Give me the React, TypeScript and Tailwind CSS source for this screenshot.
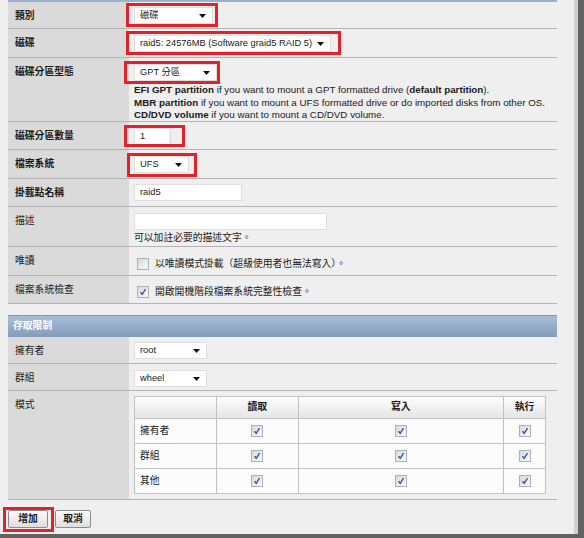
import React from "react";

function Arrow() {
  return (
    <svg width="7" height="4" viewBox="0 0 7 4" className="shrink-0">
      <polygon points="0,0 7,0 3.5,4" fill="#111" />
    </svg>
  );
}

function Select({ text, className }: { text: string; className: string }) {
  return (
    <div
      className={`flex h-[17px] items-center justify-between border border-[#dedede] bg-white pl-[5px] pr-[6px] text-[9.3px] ${className}`}
    >
      <span className="whitespace-nowrap">{text}</span>
      <Arrow />
    </div>
  );
}

function Input({ text, className }: { text?: string; className: string }) {
  return (
    <div className={`flex h-[17px] items-center border border-[#dedede] bg-white pl-[5px] text-[9.3px] ${className}`}>
      {text}
    </div>
  );
}

function Red({ className }: { className: string }) {
  return <span className={`pointer-events-none absolute border-[3px] border-[#e1222a] ${className}`} />;
}

function Check({ on }: { on?: boolean }) {
  return (
    <span className="inline-flex h-[12px] w-[12px] shrink-0 items-center justify-center border border-[#a9b1bb] bg-gradient-to-br from-[#d8d8d8] to-[#fbfbfb]">
      {on && (
        <svg width="8" height="8" viewBox="0 0 8 8">
          <path d="M1.5 4.2 L3.2 6.3 L6.5 1.2" fill="none" stroke="#3653b0" strokeWidth="1.4" />
        </svg>
      )}
    </span>
  );
}

function Row({
  label,
  bold,
  h,
  children,
}: {
  label: string;
  bold?: boolean;
  h: string;
  children?: React.ReactNode;
}) {
  return (
    <div className={`flex border-b border-[#b4b4b4] ${h}`}>
      <div className={`w-[121px] shrink-0 bg-[#dadada] pl-[7px] pt-[8px] leading-[12px] ${bold ? "font-bold" : ""}`}>
        {label}
      </div>
      <div className="flex-1 pl-[5px]">{children}</div>
    </div>
  );
}

export default function App() {
  return (
    <div className="h-[538px] w-[584px] overflow-hidden bg-[#626262] font-['Liberation_Sans','Noto_Sans_CJK_TC',sans-serif] text-[9.8px] text-[#1a1a1a]">
      <div className="h-[534px] w-[578px] border-r-[4px] border-[#cfcfcf] bg-[#efefef]">
        <div className="ml-[8px] w-[549px]">
          <div className="h-[2px] bg-[#9cb1cc]" />

          <Row label="類別" bold h="h-[27px]">
            <div className="relative mt-[5px] w-[79px]">
              <Select text="磁碟" className="w-[79px]" />
              <Red className="-top-[4px] -bottom-[3px] -left-[8px] -right-[5px]" />
            </div>
          </Row>

          <Row label="磁碟" bold h="h-[29px]">
            <div className="relative mt-[6px] w-[197px]">
              <Select text="raid5: 24576MB (Software graid5 RAID 5)" className="w-[197px]" />
              <Red className="-top-[4px] -bottom-[3px] -left-[8px] -right-[10px]" />
            </div>
          </Row>

          <Row label="磁碟分區型態" bold h="h-[64px]">
            <div className="relative mt-[6px] w-[83px]">
              <Select text="GPT 分區" className="w-[83px] h-[16px]" />
              <Red className="-top-[3px] -bottom-[3px] -left-[10px] -right-[3px]" />
            </div>
            <div className="mt-[3px] leading-[12.5px]">
              <div>
                <b>EFI GPT partition</b> if you want to mount a GPT formatted drive (<b>default partition</b>).
              </div>
              <div>
                <b>MBR partition</b> if you want to mount a UFS formatted drive or do imported disks from other OS.
              </div>
              <div>
                <b>CD/DVD volume</b> if you want to mount a CD/DVD volume.
              </div>
            </div>
          </Row>

          <Row label="磁碟分區數量" bold h="h-[28px]">
            <div className="relative mt-[6px] w-[38px]">
              <Input text="1" className="w-[38px] border-r-[3px] border-r-[#e6e6e6]" />
              <Red className="-top-[3px] -bottom-[2px] -left-[10px] -right-[13px]" />
            </div>
          </Row>

          <Row label="檔案系統" bold h="h-[29px]">
            <div className="relative mt-[6px] w-[55px]">
              <Select text="UFS" className="w-[55px]" />
              <Red className="-top-[3px] -bottom-[4px] -left-[7px] -right-[8px]" />
            </div>
          </Row>

          <Row label="掛載點名稱" bold h="h-[28px]">
            <Input text="raid5" className="mt-[5px] w-[108px]" />
          </Row>

          <Row label="描述" h="h-[40px]">
            <Input className="mt-[6px] w-[193px]" />
            <div className="mt-[2px] leading-[12px]">可以加註必要的描述文字。</div>
          </Row>

          <Row label="唯讀" h="h-[29px]">
            <div className="mt-[10px] flex items-center gap-[6px] pl-[3px]">
              <Check />
              <span>以唯讀模式掛載（超級使用者也無法寫入）。</span>
            </div>
          </Row>

          <Row label="檔案系統檢查" h="h-[28px]">
            <div className="mt-[9px] flex items-center gap-[6px] pl-[3px]">
              <Check on />
              <span>開啟開機階段檔案系統完整性檢查。</span>
            </div>
          </Row>

          <div className="mt-[11px] h-[22px] border-t border-[#7f98b9] bg-gradient-to-b from-[#a9bcd4] to-[#849cbc] pl-[5px] font-bold leading-[20px] text-white">
            存取限制
          </div>

          <Row label="擁有者" h="h-[27px]">
            <Select text="root" className="mt-[5px] w-[73px]" />
          </Row>

          <Row label="群組" h="h-[27px]">
            <Select text="wheel" className="mt-[6px] w-[73px]" />
          </Row>

          <Row label="模式" h="h-[109px]">
            <table className="mt-[5px] w-[412px] border-collapse bg-[#fcfcfc]">
              <thead>
                <tr className="h-[22px] bg-gradient-to-b from-[#fdfdfd] to-[#e4e4e4] font-bold">
                  <th className="w-[82px] border border-[#c2c2c2]" />
                  <th className="w-[82px] border border-[#c2c2c2]">讀取</th>
                  <th className="w-[206px] border border-[#c2c2c2]">寫入</th>
                  <th className="w-[42px] border border-[#c2c2c2]">執行</th>
                </tr>
              </thead>
              <tbody>
                {["擁有者", "群組", "其他"].map((r) => (
                  <tr key={r} className="h-[25px]">
                    <td className="border border-[#c2c2c2] pl-[5px]">{r}</td>
                    <td className="border border-[#c2c2c2] text-center">
                      <span className="inline-flex align-middle"><Check on /></span>
                    </td>
                    <td className="border border-[#c2c2c2] text-center">
                      <span className="inline-flex align-middle"><Check on /></span>
                    </td>
                    <td className="border border-[#c2c2c2] text-center">
                      <span className="inline-flex align-middle"><Check on /></span>
                    </td>
                  </tr>
                ))}
              </tbody>
            </table>
          </Row>

          <div className="flex gap-[7px] pt-[10px]">
            <div className="relative">
              <button className="h-[18px] w-[40px] rounded-[2px] border border-[#8c8c8c] bg-gradient-to-b from-[#fcfcfc] to-[#dedede] font-bold">
                增加
              </button>
              <Red className="-top-[3px] -bottom-[4px] -left-[5px] -right-[6px]" />
            </div>
            <button className="h-[18px] w-[36px] rounded-[2px] border border-[#8c8c8c] bg-gradient-to-b from-[#fcfcfc] to-[#dedede] font-bold">
              取消
            </button>
          </div>
        </div>
      </div>
    </div>
  );
}
